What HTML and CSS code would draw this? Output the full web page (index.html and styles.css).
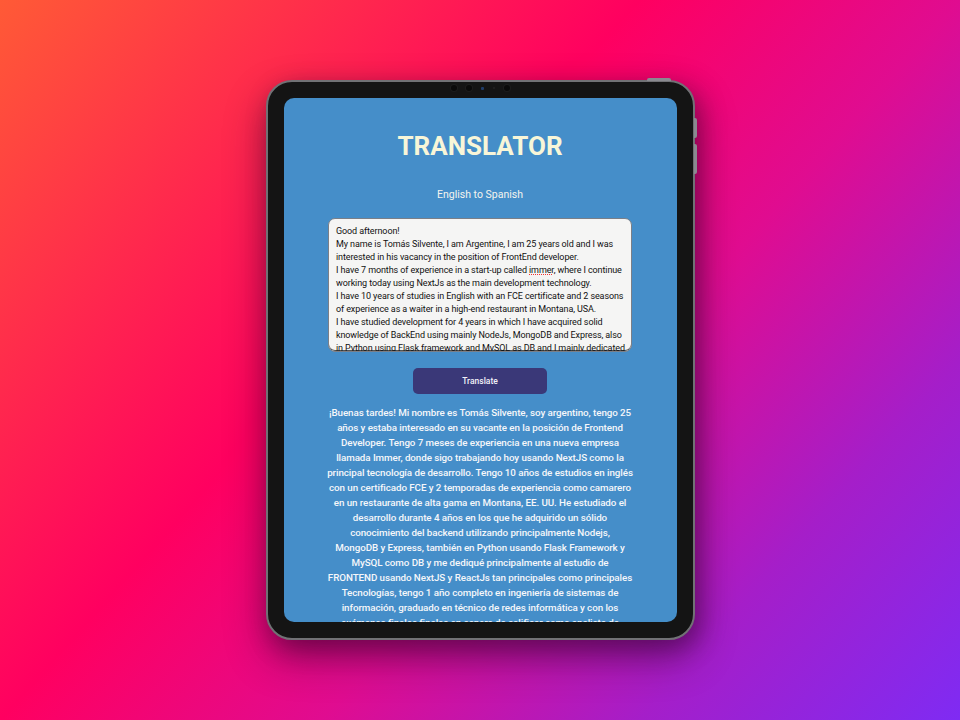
FILE: index.html
```html
<!DOCTYPE html>
<html lang="en">
<head>
<meta charset="utf-8">
<title>Translator</title>
<link rel="stylesheet" href="styles.css">
</head>
<body>
<div class="stage">
  <div class="tablet">
    <span class="btn-top"></span>
    <span class="btn-side btn-side-1"></span>
    <span class="btn-side btn-side-2"></span>
    <div class="cameras">
      <span class="dot"></span><span class="dot"></span><span class="lens"></span><span class="pin"></span><span class="dot"></span>
    </div>
    <div class="screen">
      <h1 class="title">TRANSLATOR</h1>
      <p class="subtitle">English to Spanish</p>
      <div class="input">Good afternoon!<br>My name is Tomás Silvente, I am Argentine, I am 25 years old and I was<br>interested in his vacancy in the position of FrontEnd developer.<br>I have 7 months of experience in a start-up called <span class="spell">immer</span>, where I continue<br>working today using NextJs as the main development technology.<br>I have 10 years of studies in English with an FCE certificate and 2 seasons<br>of experience as a waiter in a high-end restaurant in Montana, USA.<br>I have studied development for 4 years in which I have acquired solid<br>knowledge of BackEnd using mainly NodeJs, MongoDB and Express, also<br>in Python using Flask framework and MySQL as DB and I mainly dedicated<br>myself to the study of FRONTEND using NextJs and ReactJs as main</div>
      <button class="translate">Translate</button>
      <p class="output">¡Buenas tardes! Mi nombre es Tomás Silvente, soy argentino, tengo 25<br>años y estaba interesado en su vacante en la posición de Frontend<br>Developer. Tengo 7 meses de experiencia en una nueva empresa<br>llamada Immer, donde sigo trabajando hoy usando NextJS como la<br>principal tecnología de desarrollo. Tengo 10 años de estudios en inglés<br>con un certificado FCE y 2 temporadas de experiencia como camarero<br>en un restaurante de alta gama en Montana, EE. UU. He estudiado el<br>desarrollo durante 4 años en los que he adquirido un sólido<br>conocimiento del backend utilizando principalmente Nodejs,<br>MongoDB y Express, también en Python usando Flask Framework y<br>MySQL como DB y me dediqué principalmente al estudio de<br>FRONTEND usando NextJS y ReactJs tan principales como principales<br>Tecnologías, tengo 1 año completo en ingeniería de sistemas de<br>información, graduado en técnico de redes informática y con los<br>exámenes finales finales en espera de calificar como analista de<br>sistemas.</p>
    </div>
  </div>
</div>
</body>
</html>
```
FILE: styles.css
```css
* { box-sizing: border-box; }
html, body { margin: 0; height: 100%; }
body {
  background: linear-gradient(131.6deg, #ff5a36 0%, #ff0060 40%, #e00c90 60%, #a51ec9 80%, #7f2bf3 100%);
  font-family: Roboto, "Liberation Sans", sans-serif;
}
.stage {
  width: 960px;
  height: 720px;
  display: flex;
  align-items: center;
  justify-content: center;
}
.tablet {
  position: relative;
  width: 429px;
  height: 560px;
  padding: 16px;
  background: #141414;
  border: 2px solid #717175;
  border-radius: 26px;
  box-shadow: 0 18px 40px rgba(40, 0, 40, 0.45), 6px 8px 24px rgba(40, 0, 40, 0.35);
}
.btn-top {
  position: absolute;
  top: -4px;
  right: 22px;
  width: 24px;
  height: 3px;
  background: #8a8a90;
  border-radius: 2px 2px 0 0;
}
.btn-side {
  position: absolute;
  right: -4px;
  width: 3px;
  background: #8a8a90;
  border-radius: 0 2px 2px 0;
}
.btn-side-1 { top: 36px; height: 20px; }
.btn-side-2 { top: 62px; height: 30px; }
.cameras {
  position: absolute;
  top: 3px;
  left: 0;
  right: 0;
  display: flex;
  justify-content: center;
  align-items: center;
  gap: 9px;
}
.cameras .dot { width: 6px; height: 6px; border-radius: 50%; background: #0a0a0a; box-shadow: 0 0 0 1px #1c1c1c; }
.cameras .lens { width: 3px; height: 3px; border-radius: 1px; background: #1f3d6a; }
.cameras .pin { width: 2px; height: 2px; border-radius: 50%; background: #222; }
.screen {
  width: 393px;
  height: 524px;
  background: #458ec9;
  border-radius: 10px;
  overflow: hidden;
  display: flex;
  flex-direction: column;
  align-items: center;
  padding-top: 32px;
}
.screen > * { flex-shrink: 0; }
.title {
  margin: 0;
  font-size: 26px;
  line-height: 32px;
  font-weight: 700;
  color: #f8f6d8;
}
.subtitle {
  margin: 25px 0 0;
  font-size: 10.5px;
  line-height: 16px;
  color: #f4f4ee;
}
.input {
  margin-top: 15px;
  width: 304px;
  height: 134px;
  padding: 6px 7px;
  background: #f5f5f4;
  border: 1px solid #7a7f88;
  border-radius: 7px;
  box-shadow: inset 0 -1px 0 #555;
  font-size: 9px;
  line-height: 13px;
  letter-spacing: -0.1px;
  color: #111;
  white-space: nowrap;
  overflow: hidden;
}
.spell { text-decoration: underline dotted #e33; text-decoration-thickness: 1px; }
.translate {
  margin-top: 16px;
  width: 134px;
  height: 26px;
  border: 0;
  border-radius: 5px;
  background: #3a3878;
  color: #f2f2f8;
  font-family: Roboto, "Liberation Sans", sans-serif;
  font-size: 8.5px;
  font-weight: 500;
}
.output {
  margin: 11px 0 0;
  text-align: center;
  font-size: 9.8px;
  line-height: 15px;
  font-weight: 500;
  letter-spacing: -0.07px;
  color: #f6f7fa;
  white-space: nowrap;
}
```
